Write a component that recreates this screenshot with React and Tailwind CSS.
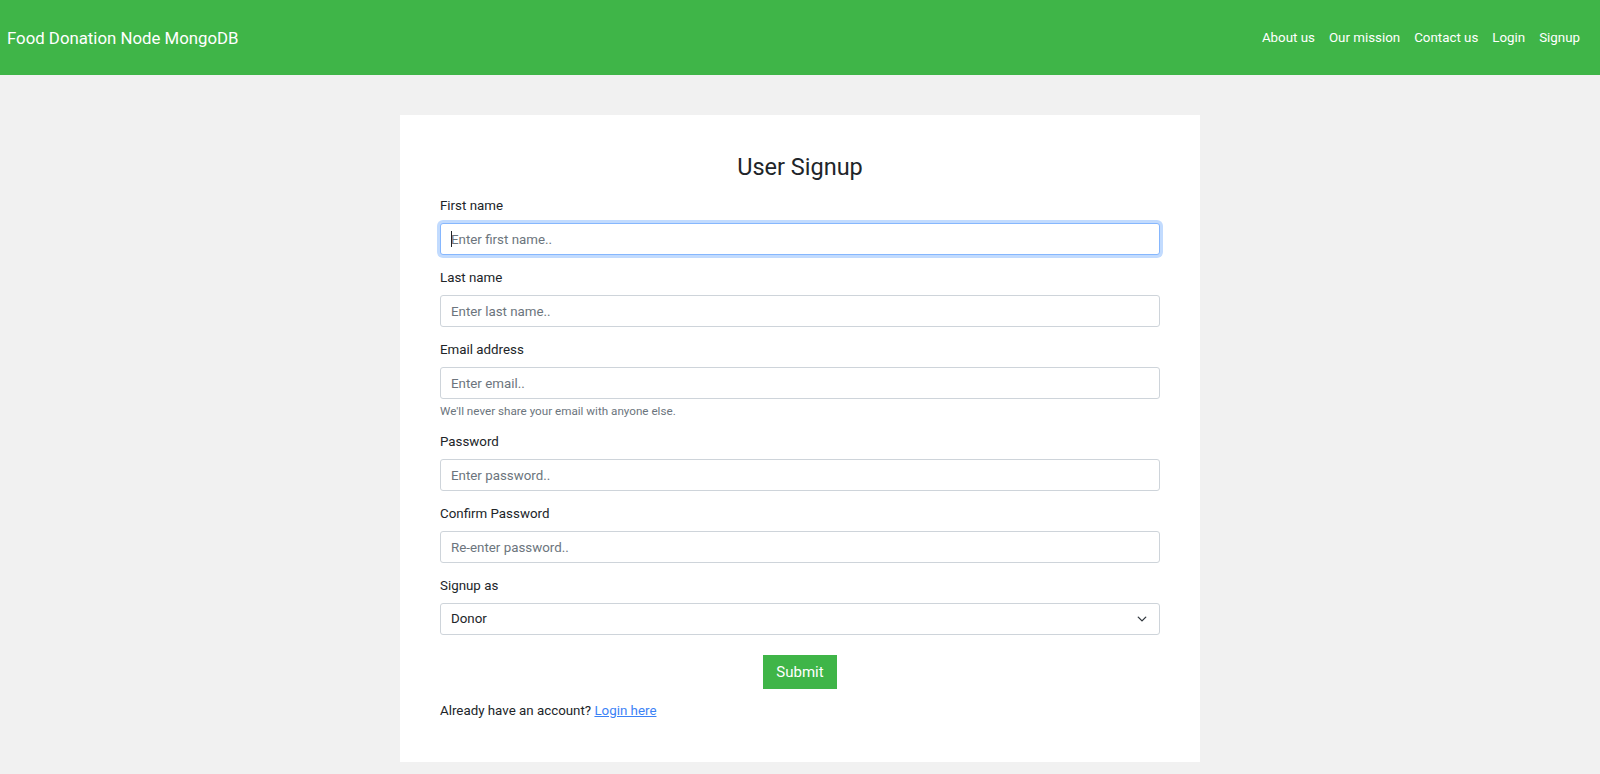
import React from "react";

const inputCls =
  "block w-full h-[32px] rounded-[3px] border border-[#ced4da] bg-white px-[10px] text-[13.33px] text-[#212529] placeholder:text-[#6c757d] outline-none";

function Field({ label, placeholder, type = "text", focused = false, help }) {
  return (
    <div className="mb-[13px]">
      <label className="block text-[13.33px] leading-[20px] mb-[7px] text-[#212529]">{label}</label>
      {focused ? (
        <div className="relative">
          <input
            type={type}
            placeholder={placeholder}
            className="block w-full h-[32px] rounded-[3px] border border-[#86b7fe] bg-white px-[10px] text-[13.33px] text-[#212529] placeholder:text-[#6c757d] outline-none shadow-[0_0_0_3px_rgba(13,110,253,0.25)]"
          />
          <span className="pointer-events-none absolute left-[11px] top-[8px] h-[16px] w-px bg-[#212529]" />
        </div>
      ) : (
        <input type={type} placeholder={placeholder} className={inputCls} />
      )}
      {help && (
        <div className="mt-[4px] text-[11.67px] leading-[16px] text-[#6c757d]">{help}</div>
      )}
    </div>
  );
}

export default function App() {
  return (
    <div className="min-h-screen bg-[#f1f1f1] font-['Roboto',sans-serif]">
      <nav className="h-[75px] bg-[#3fb548] flex items-center justify-between pl-[7px] pr-[13px]">
        <span className="text-white text-[16.8px] leading-[24px]">Food Donation Node MongoDB</span>
        <ul className="flex items-center">
          {["About us", "Our mission", "Contact us", "Login", "Signup"].map((t) => (
            <li key={t}>
              <a href="#" className="block px-[7px] text-white text-[13.33px] leading-[20px]">
                {t}
              </a>
            </li>
          ))}
        </ul>
      </nav>
      <main className="pt-[40px]">
        <div className="w-[800px] mx-auto bg-white px-10 pt-[38px] pb-[41px]">
          <h3 className="text-center text-[23.5px] leading-[29px] text-[#212529] mb-[14px] font-normal">
            User Signup
          </h3>
          <form onSubmit={(e) => e.preventDefault()}>
            <Field label="First name" placeholder="Enter first name.." focused />
            <Field label="Last name" placeholder="Enter last name.." />
            <Field
              label="Email address"
              placeholder="Enter email.."
              type="email"
              help="We'll never share your email with anyone else."
            />
            <Field label="Password" placeholder="Enter password.." type="password" />
            <Field label="Confirm Password" placeholder="Re-enter password.." type="password" />
            <div>
              <label className="block text-[13.33px] leading-[20px] mb-[7px] text-[#212529]">Signup as</label>
              <div className="relative">
                <select className="block w-full h-[32px] appearance-none rounded-[3px] border border-[#ced4da] bg-white pl-[10px] pr-[30px] text-[13.33px] text-[#212529] outline-none">
                  <option>Donor</option>
                  <option>Agent</option>
                </select>
                <svg
                  className="pointer-events-none absolute right-[13px] top-1/2 -translate-y-1/2"
                  width="10"
                  height="7"
                  viewBox="0 0 16 11"
                  fill="none"
                >
                  <path d="M2 2.5l6 6 6-6" stroke="#343a40" strokeWidth="2.2" strokeLinecap="round" strokeLinejoin="round" />
                </svg>
              </div>
            </div>
            <div className="flex justify-center mt-[20px]">
              <button
                type="submit"
                className="h-[34px] w-[74px] bg-[#3fb548] text-white text-[15px] leading-[20px]"
              >
                Submit
              </button>
            </div>
            <p className="mt-[12px] text-[13.33px] leading-[20px] text-[#212529]">
              Already have an account?{" "}
              <a href="#" className="text-[#3b82f6] underline">
                Login here
              </a>
            </p>
          </form>
        </div>
      </main>
    </div>
  );
}
